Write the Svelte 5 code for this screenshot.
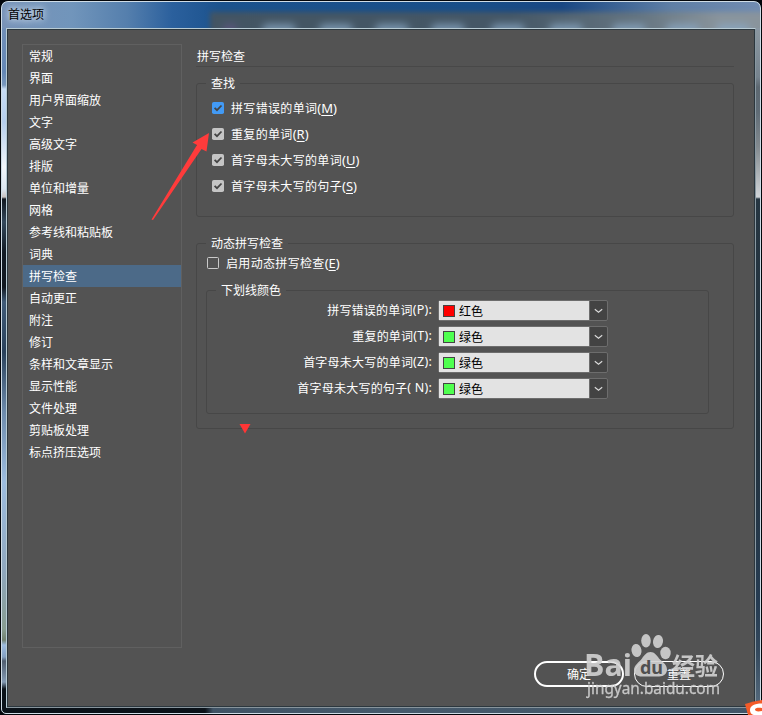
<script>
  const categories = ['常规', '界面', '用户界面缩放', '文字', '高级文字', '排版', '单位和增量', '网格', '参考线和粘贴板', '词典', '拼写检查', '自动更正', '附注', '修订', '条样和文章显示', '显示性能', '文件处理', '剪贴板处理', '标点挤压选项'];
  let selected = $state('拼写检查');
  const checks = [
    { label: '拼写错误的单词', key: 'M', focus: true },
    { label: '重复的单词', key: 'R' },
    { label: '首字母未大写的单词', key: 'U' },
    { label: '首字母未大写的句子', key: 'S' }
  ];
  const colors = [
    { label: '拼写错误的单词', key: '(P):', name: '红色', value: '#ff0000' },
    { label: '重复的单词', key: '(T):', name: '绿色', value: '#4fff4f' },
    { label: '首字母未大写的单词', key: '(Z):', name: '绿色', value: '#4fff4f' },
    { label: '首字母未大写的句子', key: '( N):', name: '绿色', value: '#4fff4f' }
  ];
  const blurs = [58, 115, 171, 227, 287, 345, 408, 462, 512];
</script>

<div class="window">
  <div class="edge left"></div>
  <div class="edge right"></div>
  <div class="bottom"></div>
  <header>
    <div class="behind">
      <i class="purple"></i>
      {#each blurs as x}<i style="left:{x - 6}px"></i>{/each}
    </div>
    <span>首选项</span>
  </header>
  <main>
    <nav>
      {#each categories as c}
        <button class:active={c === selected} onclick={() => (selected = c)}>{c}</button>
      {/each}
    </nav>
    <section class="page">
      <h1>拼写检查</h1>
      <div class="group find">
        <span class="legend">查找</span>
        {#each checks as c}
          <label class="check">
            <svg width="12" height="12" viewBox="0 0 12 12"><rect width="12" height="12" rx="1.8" fill={c.focus ? '#429af5' : '#c5c5c5'} /><path d="M2.600 5.800 5 8.200 9.500 3.500" fill="none" stroke="#444" stroke-width="1.8" /></svg>
            <span class="wide">{c.label}</span><span class="key">(<u>{c.key}</u>)</span>
          </label>
        {/each}
      </div>
      <div class="group dynamic">
        <span class="legend">动态拼写检查</span>
        <label class="check enable">
          <svg width="12" height="12" viewBox="0 0 12 12"><rect x=".5" y=".5" width="11" height="11" rx="1" fill="none" stroke="#cacaca" /></svg>
          <span class="wide">启用动态拼写检查</span><span class="key">(<u>E</u>)</span>
        </label>
        <div class="group underline">
          <span class="legend">下划线颜色</span>
          {#each colors as c}
            <div class="row">
              <div class="name"><span>{c.label}</span><span class="key">{c.key}</span></div>
              <div class="select">
                <div class="value"><i style="background:{c.value}"></i>{c.name}</div>
                <div class="drop"><svg width="9" height="6" viewBox="0 0 9 6"><path d="M.8 1.2 4.5 4.2 8.2 1.2" fill="none" stroke="#ddd" stroke-width="1.1" /></svg></div>
              </div>
            </div>
          {/each}
        </div>
      </div>
      <footer>
        <button class="ok">确定</button>
        <button>重置</button>
      </footer>
    </section>
  </main>
  <svg class="overlay" width="762" height="715" viewBox="0 0 762 715">
    <path d="M209 133 192.500 142.500 197 145 151.500 219.500 153 220 201.500 149 206.500 151.500Z" fill="#ff3b3b" />
    <path d="M239.500 424H250.500L245 433.500Z" fill="#ff3535" />
    <g fill="#d2d2d2" opacity=".9">
      <ellipse cx="636.500" cy="650.500" rx="5" ry="6.500" transform="rotate(-10 636.500 650.500)" />
      <ellipse cx="646" cy="640.800" rx="4.800" ry="6.800" />
      <ellipse cx="658" cy="641.500" rx="5" ry="6.500" transform="rotate(10 658 641.500)" />
      <ellipse cx="665.500" cy="653" rx="5.200" ry="6.200" />
      <path d="M650.500 652c-4 0-6.500 3.500-8.500 6.500-3 4-8 6.500-8 11.500 0 4 3 6.500 8 6.500h17c5 0 8-3 8-7 0-5-5-8-8-11-2-3-4.500-6.500-8.500-6.500Z" />
      <text x="584" y="675.500" font-family="Open Sans" font-size="31" font-weight="bold" textLength="48" lengthAdjust="spacingAndGlyphs">Bai</text>
      <text x="672" y="674.500" font-size="24" font-weight="bold" textLength="46" lengthAdjust="spacingAndGlyphs">经验</text>
      <text x="587" y="694" font-size="16" textLength="133" lengthAdjust="spacingAndGlyphs" stroke="#d2d2d2" stroke-width=".3">jingyan.baidu.com</text>
    </g>
    <text x="640" y="673.500" font-size="18" fill="#505050" font-weight="bold" textLength="23" lengthAdjust="spacingAndGlyphs">du</text>
    <path d="M745 704Q754 701 762 700V715H748Z" fill="#f45b28" />
    <path d="M762 703.500C754 703.500 750 706 750 710 750 713 752 715 755 715H762V711C757 712 755 711 755 709.500 755 708 758 707.500 762 708Z" fill="#fff" />
  </svg>
</div>

<style>
  :global(body) { margin: 0; background: #03060b; }
  .window {
    box-sizing: border-box; position: relative; width: 762px; height: 715px;
    padding: 2px 7px 7px 7px; overflow: hidden; background: #0b151e;
    font: 12px/16px "Noto Sans CJK SC", sans-serif; color: #fff;
  }
  .window::before {
    content: ""; position: absolute; z-index: 3; inset: 1px 1px 1px 1px; border: 1px solid #cfdce6;
    border-radius: 7px 7px 5px 5px; box-shadow: 0 0 0 8px #03060b; pointer-events: none;
  }
  .edge { position: absolute; top: 2px; bottom: 7px; width: 5px; }
  .left { left: 2px; background: linear-gradient(#7894ba 0, #6487b5 70px, #7998bd 83px, #c7dcf4 87px, #b6cfee 120px, #f2f6fb 165px, #dce7f2 187px, #c8c2c0 195px, #10171f 197px, #34485b 220px, #121b25 250px, #111820 285px, #405b78 300px, #29415b 350px, #6d8bac 410px, #9dbde0 480px, #8fa7bd 570px, #879c91 627px, #718170 638px, #9dbce1 643px, #839fc0 655px, #505e70 659px, #849bb4 680px, #0a1219 687px); }
  .right { right: 2px; background: linear-gradient(#7891b3, #8a969f 30px, #76838e 75px, #5d6871 85px, #606c76 110px, #838a8f 145px, #d1d5d9 195px, #263642 197px, #23323d 430px, #263c52 600px, #34495d 650px, #53687b 700px); }
  .bottom { position: absolute; left: 2px; right: 2px; bottom: 2px; height: 6px; background: linear-gradient(90deg, #0b1219 203px, #405365 211px, #465a6c 400px, #425567); }
  header {
    position: relative; height: 26px; margin: 0 -5px; overflow: hidden;
    background: linear-gradient(90deg, #7893b8, #7195bb 70px, #557fad 125px, #2b609d 170px, #1b528d 220px, #194e88 470px, #194783 560px, #5f7fa6 670px, #718cb1);
  }
  header span { position: absolute; left: 6px; top: 4px; color: #000; text-shadow: 0 0 6px #dbe7f3, 0 0 9px #dbe7f3; }
  .behind { position: absolute; left: 208px; right: -8px; top: 10px; height: 24px; background: linear-gradient(90deg, #435563 0, #455766 300px, #657581 430px, #89949c 510px); filter: blur(2.500px); }
  .behind i { position: absolute; top: 12px; width: 34px; height: 11px; border-radius: 8px; background: #8aa9c6; opacity: .75; filter: blur(3px); }
  .behind .purple { left: 13px; width: 14px; background: #655589; opacity: .7; }
  main {
    position: relative; box-sizing: border-box; display: flex; height: 680px; margin: 0 -1px;
    padding: 15px 19px 0 14px; background: #535353; border: 1px solid #b8cbd4;
    border-right-color: #8998a1; border-bottom-color: #87949c; box-shadow: inset 0 0 0 1px #2c373e;
  }
  nav { box-sizing: border-box; width: 160px; height: 604px; margin-left: 1px; border: 1px solid #606060; flex: none; }
  button { font: inherit; color: inherit; background: none; border: 0; padding: 0; }
  nav button { display: block; width: 100%; height: 22px; padding-left: 6px; text-align: left; }
  .active { background: #4c6a88; }
  .page { display: flex; flex-direction: column; width: 538px; margin-left: 14px; }
  h1 { box-sizing: border-box; height: 23px; margin: 0; padding: 4px 0 0 1px; font: inherit; border-bottom: 1px solid #484848; }
  .group { position: relative; box-sizing: border-box; border: 1px solid #474747; border-radius: 3px; }
  .legend { position: absolute; left: 9px; top: -9px; padding: 0 5px; background: #535353; }
  .find { height: 134px; margin-top: 16px; padding: 11px 0 0 15px; }
  .check { display: flex; align-items: center; height: 26px; }
  .check svg { margin-right: 7px; }
  .wide { letter-spacing: .330px; }
  .key { font-family: "Noto Sans", "Noto Sans CJK SC", sans-serif; font-size: 12.500px; }
  .check .key { font-size: 13px; }
  u { text-underline-offset: 2px; text-decoration-thickness: 1px; }
  .name { letter-spacing: .22px; }
  .dynamic { height: 186px; margin-top: 26px; padding: 7px 0 0 9px; }
  .enable { padding-left: 1px; height: 24px; }
  .underline { width: 503px; height: 124px; margin-top: 15px; padding-top: 9px; }
  .row { display: flex; height: 21px; margin-bottom: 5px; }
  .name { display: flex; justify-content: flex-end; width: 225px; padding-top: 2px; margin-right: 6px; }
  .select { box-sizing: border-box; display: flex; width: 170px; height: 21px; border: 1px solid #6d6d6d; border-radius: 2px; background: #434343; }
  .value { display: flex; align-items: center; width: 150px; color: #000; background: #e3e3e3; }
  .value i { box-sizing: border-box; width: 12px; height: 12px; border: 1px solid #444; margin: 0 4px; }
  .drop { display: flex; flex: 1; align-items: center; justify-content: center; border-left: 1px solid #6d6d6d; }
  footer { display: flex; gap: 10px; margin: 232px 0 0 338px; }
  footer button { box-sizing: border-box; width: 90px; height: 26px; border: 1px solid #fff; border-radius: 13px; flex: none; }
  footer .ok { border-width: 2px; }
  .overlay { position: absolute; z-index: 4; inset: 0; pointer-events: none; font-family: "Noto Sans", "Noto Sans CJK SC", sans-serif; }
</style>
